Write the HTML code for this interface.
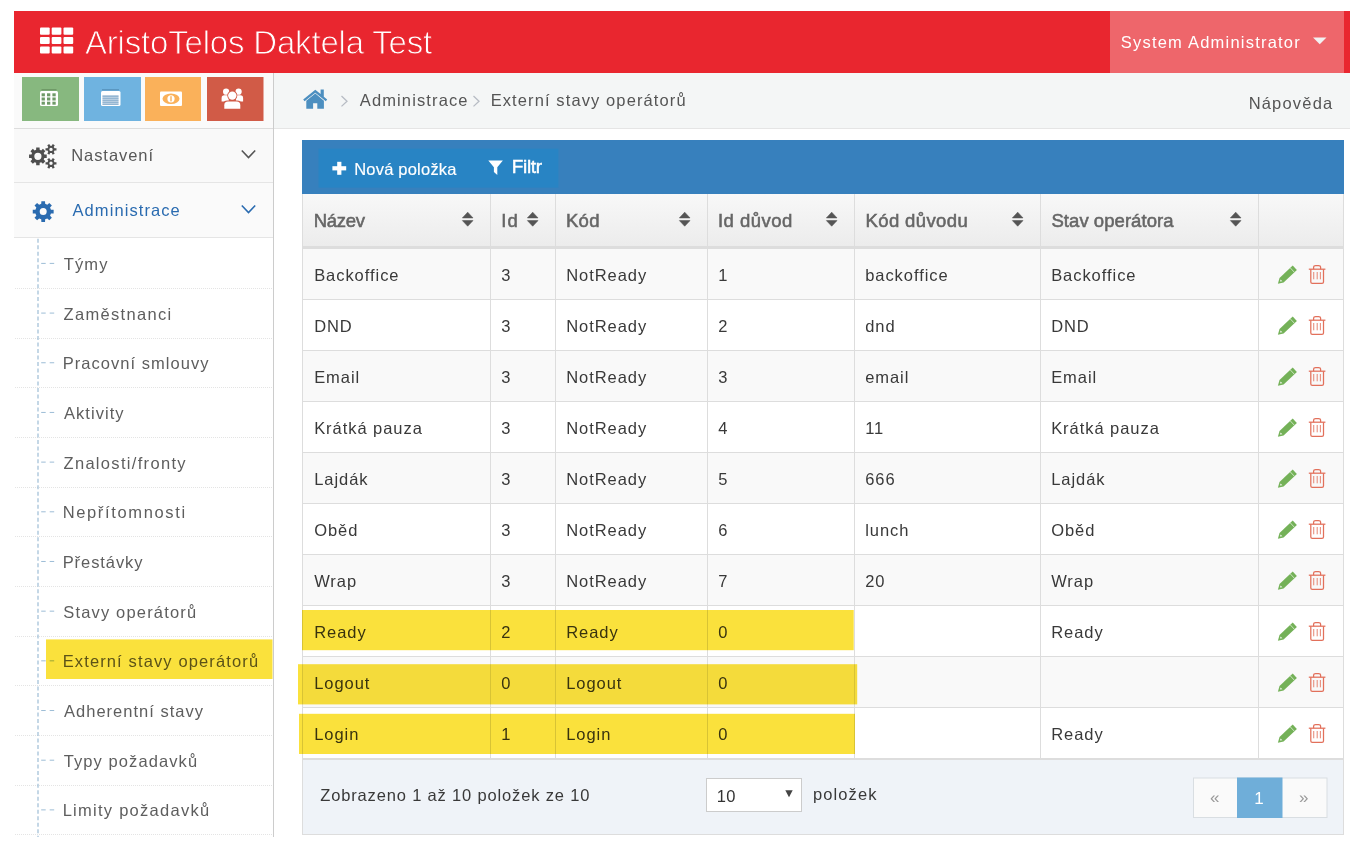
<!DOCTYPE html>
<html><head><meta charset="utf-8"><title>Externí stavy operátorů</title>
<style>
html,body{margin:0;padding:0;background:#fff;width:1366px;height:848px;overflow:hidden}
svg{display:block;font-family:"Liberation Sans",sans-serif}
</style></head><body>
<svg width="1366" height="848" viewBox="0 0 1366 848">
<rect x="14" y="11" width="1336" height="62" fill="#e9262f" />
<rect x="1110" y="11" width="234" height="62" fill="#ee666b" />
<rect x="40" y="27.6" width="9.7" height="7.2" fill="#fff" rx="1"/>
<rect x="40" y="36.9" width="9.7" height="7.2" fill="#fff" rx="1"/>
<rect x="40" y="46.4" width="9.7" height="7.2" fill="#fff" rx="1"/>
<rect x="51.7" y="27.6" width="9.7" height="7.2" fill="#fff" rx="1"/>
<rect x="51.7" y="36.9" width="9.7" height="7.2" fill="#fff" rx="1"/>
<rect x="51.7" y="46.4" width="9.7" height="7.2" fill="#fff" rx="1"/>
<rect x="63.5" y="27.6" width="9.7" height="7.2" fill="#fff" rx="1"/>
<rect x="63.5" y="36.9" width="9.7" height="7.2" fill="#fff" rx="1"/>
<rect x="63.5" y="46.4" width="9.7" height="7.2" fill="#fff" rx="1"/>
<text x="84.94" y="53.50" font-size="33" fill="#fff" textLength="347.31" lengthAdjust="spacing" stroke="#e9262f" stroke-width="0.9">AristoTelos Daktela Test</text>
<text x="1120.75" y="48.20" font-size="16.5" fill="#fff" textLength="179.02" lengthAdjust="spacing" >System Administrator</text>
<path d="M1313 37.5 L1326.5 37.5 L1319.75 44.2 Z" fill="#f2f2f2" />
<rect x="14" y="73" width="259" height="55" fill="#fafafa" />
<rect x="14" y="128" width="259" height="1" fill="#dddddd" />
<rect x="14" y="129" width="259" height="53" fill="#f9f9f9" />
<rect x="14" y="182" width="259" height="1" fill="#e5e5e5" />
<rect x="14" y="183" width="259" height="54" fill="#fafafa" />
<rect x="14" y="237" width="259" height="1" fill="#e5e5e5" />
<rect x="14" y="238" width="259" height="599" fill="#ffffff" />
<rect x="273" y="73" width="1" height="764" fill="#cccccc" />
<rect x="22" y="77" width="57" height="44" fill="#87b87f" />
<rect x="84" y="77" width="57" height="44" fill="#6fb3e0" />
<rect x="145" y="77" width="56" height="44" fill="#fab15a" />
<rect x="207" y="77" width="56.5" height="44" fill="#d15b47" />
<rect x="41.5" y="89.3" width="15" height="1" fill="#4f6f4a" opacity="0.6"/>
<rect x="40" y="91" width="18" height="15" fill="#ffffff" rx="1.5"/>
<rect x="41.6" y="93.3" width="3.3" height="3" fill="#6f9a68" />
<rect x="41.6" y="97.5" width="3.3" height="3" fill="#6f9a68" />
<rect x="41.6" y="101.7" width="3.3" height="3" fill="#6f9a68" />
<rect x="47" y="93.3" width="3.3" height="3" fill="#6f9a68" />
<rect x="47" y="97.5" width="3.3" height="3" fill="#6f9a68" />
<rect x="47" y="101.7" width="3.3" height="3" fill="#6f9a68" />
<rect x="52.4" y="93.3" width="3.3" height="3" fill="#6f9a68" />
<rect x="52.4" y="97.5" width="3.3" height="3" fill="#6f9a68" />
<rect x="52.4" y="101.7" width="3.3" height="3" fill="#6f9a68" />
<rect x="102" y="89.3" width="17" height="1" fill="#3f6f97" opacity="0.6"/>
<rect x="101" y="91" width="19.5" height="15" fill="#ffffff" rx="1.5"/>
<rect x="102.4" y="95.6" width="16.2" height="1" fill="#4f86b5" />
<rect x="102.4" y="97.6" width="16.2" height="1" fill="#4f86b5" />
<rect x="102.4" y="99.6" width="16.2" height="1" fill="#4f86b5" />
<rect x="102.4" y="101.6" width="16.2" height="1" fill="#4f86b5" />
<rect x="102.4" y="103.6" width="16.2" height="1" fill="#4f86b5" />
<rect x="160" y="91.5" width="22" height="14.5" fill="#ffffff" rx="1"/>
<ellipse cx="171" cy="98.8" rx="8.5" ry="5.2" fill="#fab15a"/>
<circle cx="171" cy="98.8" r="3.6" fill="#ffffff"/>
<rect x="170.3" y="96.2" width="1.4" height="5.2" fill="#fab15a" />
<circle cx="226.1" cy="91.7" r="3.1" fill="#fff"/>
<circle cx="238.6" cy="91.7" r="3.1" fill="#fff"/>
<path d="M221.6 101.5 L221.6 98 Q221.6 95.3 224.3 95.3 L228.8 95.3 L228.8 101.5 Z" fill="#fff" />
<path d="M243.1 101.5 L243.1 98 Q243.1 95.3 240.4 95.3 L235.9 95.3 L235.9 101.5 Z" fill="#fff" />
<circle cx="232.3" cy="95.6" r="5.0" fill="#d15b47"/>
<circle cx="232.3" cy="95.6" r="4.2" fill="#fff"/>
<path d="M223.2 109.2 L223.2 104.8 Q223.2 100.6 227.4 100.6 L237.2 100.6 Q241.4 100.6 241.4 104.8 L241.4 109.2 Z" fill="#d15b47" />
<path d="M224.3 108.7 L224.3 105.3 Q224.3 101.6 228 101.6 L236.6 101.6 Q240.3 101.6 240.3 105.3 L240.3 108.7 Z" fill="#fff" />
<path d="M44.36 154.51 L46.74 154.61 L46.74 157.99 L44.36 158.09 L43.73 159.60 L45.34 161.36 L42.96 163.74 L41.20 162.13 L39.69 162.76 L39.59 165.14 L36.21 165.14 L36.11 162.76 L34.60 162.13 L32.84 163.74 L30.46 161.36 L32.07 159.60 L31.44 158.09 L29.06 157.99 L29.06 154.61 L31.44 154.51 L32.07 153.00 L30.46 151.24 L32.84 148.86 L34.60 150.47 L36.11 149.84 L36.21 147.46 L39.59 147.46 L39.69 149.84 L41.20 150.47 L42.96 148.86 L45.34 151.24 L43.73 153.00 Z M34.30 156.30 a3.60 3.60 0 1 0 7.20 0 a3.60 3.60 0 1 0 -7.20 0 Z" fill="#4e4e4e" fill-rule="evenodd"/>
<path d="M54.53 148.30 L56.48 148.24 L56.48 150.56 L54.53 150.50 L53.72 151.91 L54.75 153.56 L52.73 154.73 L51.82 153.01 L50.18 153.01 L49.27 154.73 L47.25 153.56 L48.28 151.91 L47.47 150.50 L45.52 150.56 L45.52 148.24 L47.47 148.30 L48.28 146.89 L47.25 145.24 L49.27 144.07 L50.18 145.79 L51.82 145.79 L52.73 144.07 L54.75 145.24 L53.72 146.89 Z M49.30 149.40 a1.70 1.70 0 1 0 3.40 0 a1.70 1.70 0 1 0 -3.40 0 Z" fill="#4e4e4e" fill-rule="evenodd"/>
<path d="M54.53 162.20 L56.48 162.14 L56.48 164.46 L54.53 164.40 L53.72 165.81 L54.75 167.46 L52.73 168.63 L51.82 166.91 L50.18 166.91 L49.27 168.63 L47.25 167.46 L48.28 165.81 L47.47 164.40 L45.52 164.46 L45.52 162.14 L47.47 162.20 L48.28 160.79 L47.25 159.14 L49.27 157.97 L50.18 159.69 L51.82 159.69 L52.73 157.97 L54.75 159.14 L53.72 160.79 Z M49.30 163.30 a1.70 1.70 0 1 0 3.40 0 a1.70 1.70 0 1 0 -3.40 0 Z" fill="#4e4e4e" fill-rule="evenodd"/>
<text x="71.15" y="161.30" font-size="16.5" fill="#585858" textLength="81.93" lengthAdjust="spacing" >Nastavení</text>
<path d="M50.95 209.63 L53.64 209.78 L53.64 213.42 L50.95 213.57 L50.07 215.69 L51.87 217.70 L49.30 220.27 L47.29 218.47 L45.17 219.35 L45.02 222.04 L41.38 222.04 L41.23 219.35 L39.11 218.47 L37.10 220.27 L34.53 217.70 L36.33 215.69 L35.45 213.57 L32.76 213.42 L32.76 209.78 L35.45 209.63 L36.33 207.51 L34.53 205.50 L37.10 202.93 L39.11 204.73 L41.23 203.85 L41.38 201.16 L45.02 201.16 L45.17 203.85 L47.29 204.73 L49.30 202.93 L51.87 205.50 L50.07 207.51 Z M39.70 211.60 a3.50 3.50 0 1 0 7.00 0 a3.50 3.50 0 1 0 -7.00 0 Z" fill="#2a6bb0" fill-rule="evenodd"/>
<text x="72.47" y="216.20" font-size="16.5" fill="#2a6bb0" textLength="107.27" lengthAdjust="spacing" >Administrace</text>
<path d="M241.8 150.5 L248.5 157.5 L255.2 150.5" fill="none" stroke="#555" stroke-width="1.6"/>
<path d="M241.8 205.5 L248.5 212.5 L255.2 205.5" fill="none" stroke="#2a6bb0" stroke-width="1.6"/>
<line x1="15" y1="288.5" x2="273" y2="288.5" stroke="#e4e4e4" stroke-width="1" stroke-dasharray="1 1"/>
<line x1="15" y1="338.5" x2="273" y2="338.5" stroke="#e4e4e4" stroke-width="1" stroke-dasharray="1 1"/>
<line x1="15" y1="387.5" x2="273" y2="387.5" stroke="#e4e4e4" stroke-width="1" stroke-dasharray="1 1"/>
<line x1="15" y1="437.5" x2="273" y2="437.5" stroke="#e4e4e4" stroke-width="1" stroke-dasharray="1 1"/>
<line x1="15" y1="487.5" x2="273" y2="487.5" stroke="#e4e4e4" stroke-width="1" stroke-dasharray="1 1"/>
<line x1="15" y1="536.5" x2="273" y2="536.5" stroke="#e4e4e4" stroke-width="1" stroke-dasharray="1 1"/>
<line x1="15" y1="586.5" x2="273" y2="586.5" stroke="#e4e4e4" stroke-width="1" stroke-dasharray="1 1"/>
<line x1="15" y1="636.5" x2="273" y2="636.5" stroke="#e4e4e4" stroke-width="1" stroke-dasharray="1 1"/>
<line x1="15" y1="685.5" x2="273" y2="685.5" stroke="#e4e4e4" stroke-width="1" stroke-dasharray="1 1"/>
<line x1="15" y1="735.5" x2="273" y2="735.5" stroke="#e4e4e4" stroke-width="1" stroke-dasharray="1 1"/>
<line x1="15" y1="785.5" x2="273" y2="785.5" stroke="#e4e4e4" stroke-width="1" stroke-dasharray="1 1"/>
<line x1="15" y1="834.5" x2="273" y2="834.5" stroke="#e4e4e4" stroke-width="1" stroke-dasharray="1 1"/>
<line x1="38" y1="238.7" x2="38" y2="837" stroke="#9dbdd6" stroke-width="1.2" stroke-dasharray="4 2.49"/>
<line x1="41.2" y1="263.40" x2="54.3" y2="263.40" stroke="#9dbdd6" stroke-width="1" stroke-dasharray="4.5 4"/>
<text x="63.63" y="269.90" font-size="16.5" fill="#5e5e5e" textLength="43.90" lengthAdjust="spacing" >Týmy</text>
<line x1="41.2" y1="313.08" x2="54.3" y2="313.08" stroke="#9dbdd6" stroke-width="1" stroke-dasharray="4.5 4"/>
<text x="63.48" y="319.58" font-size="16.5" fill="#5e5e5e" textLength="107.64" lengthAdjust="spacing" >Zaměstnanci</text>
<line x1="41.2" y1="362.76" x2="54.3" y2="362.76" stroke="#9dbdd6" stroke-width="1" stroke-dasharray="4.5 4"/>
<text x="62.65" y="369.26" font-size="16.5" fill="#5e5e5e" textLength="145.89" lengthAdjust="spacing" >Pracovní smlouvy</text>
<line x1="41.2" y1="412.44" x2="54.3" y2="412.44" stroke="#9dbdd6" stroke-width="1" stroke-dasharray="4.5 4"/>
<text x="63.97" y="418.94" font-size="16.5" fill="#5e5e5e" textLength="59.56" lengthAdjust="spacing" >Aktivity</text>
<line x1="41.2" y1="462.12" x2="54.3" y2="462.12" stroke="#9dbdd6" stroke-width="1" stroke-dasharray="4.5 4"/>
<text x="63.48" y="468.62" font-size="16.5" fill="#5e5e5e" textLength="122.06" lengthAdjust="spacing" >Znalosti/fronty</text>
<line x1="41.2" y1="511.80" x2="54.3" y2="511.80" stroke="#9dbdd6" stroke-width="1" stroke-dasharray="4.5 4"/>
<text x="62.65" y="518.30" font-size="16.5" fill="#5e5e5e" textLength="122.47" lengthAdjust="spacing" >Nepřítomnosti</text>
<line x1="41.2" y1="561.48" x2="54.3" y2="561.48" stroke="#9dbdd6" stroke-width="1" stroke-dasharray="4.5 4"/>
<text x="62.65" y="567.98" font-size="16.5" fill="#5e5e5e" textLength="79.89" lengthAdjust="spacing" >Přestávky</text>
<line x1="41.2" y1="611.16" x2="54.3" y2="611.16" stroke="#9dbdd6" stroke-width="1" stroke-dasharray="4.5 4"/>
<text x="63.25" y="617.66" font-size="16.5" fill="#5e5e5e" textLength="132.84" lengthAdjust="spacing" >Stavy operátorů</text>
<line x1="41.2" y1="660.84" x2="54.3" y2="660.84" stroke="#9dbdd6" stroke-width="1" stroke-dasharray="4.5 4"/>
<text x="62.65" y="667.34" font-size="16.5" fill="#5e5e5e" textLength="195.45" lengthAdjust="spacing" >Externí stavy operátorů</text>
<line x1="41.2" y1="710.52" x2="54.3" y2="710.52" stroke="#9dbdd6" stroke-width="1" stroke-dasharray="4.5 4"/>
<text x="63.97" y="717.02" font-size="16.5" fill="#5e5e5e" textLength="139.06" lengthAdjust="spacing" >Adherentní stavy</text>
<line x1="41.2" y1="760.20" x2="54.3" y2="760.20" stroke="#9dbdd6" stroke-width="1" stroke-dasharray="4.5 4"/>
<text x="63.63" y="766.70" font-size="16.5" fill="#5e5e5e" textLength="133.47" lengthAdjust="spacing" >Typy požadavků</text>
<line x1="41.2" y1="809.88" x2="54.3" y2="809.88" stroke="#9dbdd6" stroke-width="1" stroke-dasharray="4.5 4"/>
<text x="62.65" y="816.38" font-size="16.5" fill="#5e5e5e" textLength="146.45" lengthAdjust="spacing" >Limity požadavků</text>
<rect x="274" y="73" width="1076" height="55" fill="#f4f6f6" />
<rect x="274" y="128" width="1076" height="1" fill="#e5e5e5" />
<path d="M303.2 99.6 L315.3 89.8 L320.6 94.1 L320.6 89.5 L323.8 89.5 L323.8 96.7 L327.2 99.6 L325.8 101.3 L315.3 92.7 L304.6 101.3 Z" fill="#4c8fc0" />
<path d="M306.3 100.8 L315.3 93.4 L323.9 100.8 L323.9 108.8 L317.3 108.8 L317.3 103.3 L313.1 103.3 L313.1 108.8 L306.3 108.8 Z" fill="#4c8fc0" />
<path d="M341.5 96 L347 101.2 L341.5 106.4" fill="none" stroke="#b7bcc4" stroke-width="1.3"/>
<path d="M473.5 96 L479 101.2 L473.5 106.4" fill="none" stroke="#b7bcc4" stroke-width="1.3"/>
<text x="359.77" y="105.60" font-size="16.5" fill="#555555" textLength="107.77" lengthAdjust="spacing" >Administrace</text>
<text x="490.65" y="105.60" font-size="16.5" fill="#555555" textLength="194.95" lengthAdjust="spacing" >Externí stavy operátorů</text>
<text x="1248.65" y="108.60" font-size="16.5" fill="#555555" textLength="83.55" lengthAdjust="spacing" >Nápověda</text>
<rect x="302" y="140" width="1042" height="54" fill="#3780bd" />
<rect x="318.5" y="148.6" width="152.5" height="39" fill="#2884c4" />
<rect x="471" y="148.6" width="87.4" height="39" fill="#2884c4" />
<rect x="337.2" y="161.8" width="4.2" height="13" fill="#fff" />
<rect x="332.4" y="166.2" width="13.8" height="4.2" fill="#fff" />
<text x="354.15" y="174.80" font-size="16.5" fill="#fff" textLength="102.35" lengthAdjust="spacing" stroke="#fff" stroke-width="0.15">Nová položka</text>
<path d="M488.3 160.6 L502.9 160.6 L497.3 167.2 L497.3 175.1 L493.9 172 L493.9 167.2 Z" fill="#fff" />
<text x="511.64" y="173.40" font-size="19" fill="#fff" textLength="30.47" lengthAdjust="spacing" stroke="#fff" stroke-width="0.45">Filtr</text>
<defs><linearGradient id="thg" x1="0" y1="0" x2="0" y2="1"><stop offset="0" stop-color="#f8f8f8"/><stop offset="1" stop-color="#ececec"/></linearGradient></defs>
<rect x="302" y="194" width="1042" height="52" fill="url(#thg)" />
<rect x="302" y="246" width="1042" height="3" fill="#dddddd" />
<rect x="302" y="249" width="1042" height="50" fill="#f9f9f9" />
<rect x="302" y="299" width="1042" height="1" fill="#dddddd" />
<rect x="302" y="300" width="1042" height="50" fill="#ffffff" />
<rect x="302" y="350" width="1042" height="1" fill="#dddddd" />
<rect x="302" y="351" width="1042" height="50" fill="#f9f9f9" />
<rect x="302" y="401" width="1042" height="1" fill="#dddddd" />
<rect x="302" y="402" width="1042" height="50" fill="#ffffff" />
<rect x="302" y="452" width="1042" height="1" fill="#dddddd" />
<rect x="302" y="453" width="1042" height="50" fill="#f9f9f9" />
<rect x="302" y="503" width="1042" height="1" fill="#dddddd" />
<rect x="302" y="504" width="1042" height="50" fill="#ffffff" />
<rect x="302" y="554" width="1042" height="1" fill="#dddddd" />
<rect x="302" y="555" width="1042" height="50" fill="#f9f9f9" />
<rect x="302" y="605" width="1042" height="1" fill="#dddddd" />
<rect x="302" y="606" width="1042" height="50" fill="#ffffff" />
<rect x="302" y="656" width="1042" height="1" fill="#dddddd" />
<rect x="302" y="657" width="1042" height="50" fill="#f9f9f9" />
<rect x="302" y="707" width="1042" height="1" fill="#dddddd" />
<rect x="302" y="708" width="1042" height="50" fill="#ffffff" />
<rect x="302" y="758" width="1042" height="1" fill="#dddddd" />
<rect x="302" y="194" width="1" height="564" fill="#dddddd" />
<rect x="490" y="194" width="1" height="564" fill="#dddddd" />
<rect x="555" y="194" width="1" height="564" fill="#dddddd" />
<rect x="707" y="194" width="1" height="564" fill="#dddddd" />
<rect x="854" y="194" width="1" height="564" fill="#dddddd" />
<rect x="1040" y="194" width="1" height="564" fill="#dddddd" />
<rect x="1258" y="194" width="1" height="564" fill="#dddddd" />
<rect x="1343" y="194" width="1" height="564" fill="#dddddd" />
<text x="313.68" y="227.30" font-size="18.5" fill="#666666" textLength="51.28" lengthAdjust="spacing" stroke="#666666" stroke-width="0.55">Název</text>
<path d="M462.40 217.9 L467.70 212.2 L473.00 217.9 Z M462.40 220.6 L467.70 226.2 L473.00 220.6 Z" fill="#555555" stroke="#555" stroke-width="0.6" stroke-linejoin="round"/>
<text x="501.29" y="227.30" font-size="18.5" fill="#666666" textLength="16.50" lengthAdjust="spacing" stroke="#666666" stroke-width="0.55">Id</text>
<path d="M527.40 217.9 L532.70 212.2 L538.00 217.9 Z M527.40 220.6 L532.70 226.2 L538.00 220.6 Z" fill="#555555" stroke="#555" stroke-width="0.6" stroke-linejoin="round"/>
<text x="565.98" y="227.30" font-size="18.5" fill="#666666" textLength="33.51" lengthAdjust="spacing" stroke="#666666" stroke-width="0.55">Kód</text>
<path d="M679.40 217.9 L684.70 212.2 L690.00 217.9 Z M679.40 220.6 L684.70 226.2 L690.00 220.6 Z" fill="#555555" stroke="#555" stroke-width="0.6" stroke-linejoin="round"/>
<text x="717.89" y="227.30" font-size="18.5" fill="#666666" textLength="74.40" lengthAdjust="spacing" stroke="#666666" stroke-width="0.55">Id důvod</text>
<path d="M826.40 217.9 L831.70 212.2 L837.00 217.9 Z M826.40 220.6 L831.70 226.2 L837.00 220.6 Z" fill="#555555" stroke="#555" stroke-width="0.6" stroke-linejoin="round"/>
<text x="865.48" y="227.30" font-size="18.5" fill="#666666" textLength="102.25" lengthAdjust="spacing" stroke="#666666" stroke-width="0.55">Kód důvodu</text>
<path d="M1012.40 217.9 L1017.70 212.2 L1023.00 217.9 Z M1012.40 220.6 L1017.70 226.2 L1023.00 220.6 Z" fill="#555555" stroke="#555" stroke-width="0.6" stroke-linejoin="round"/>
<text x="1051.46" y="227.30" font-size="18.5" fill="#666666" textLength="122.04" lengthAdjust="spacing" stroke="#666666" stroke-width="0.55">Stav operátora</text>
<path d="M1230.40 217.9 L1235.70 212.2 L1241.00 217.9 Z M1230.40 220.6 L1235.70 226.2 L1241.00 220.6 Z" fill="#555555" stroke="#555" stroke-width="0.6" stroke-linejoin="round"/>
<text x="314.15" y="281.20" font-size="16.5" fill="#393939" letter-spacing="0.95" >Backoffice</text>
<text x="501.15" y="281.20" font-size="16.5" fill="#393939" letter-spacing="0.95" >3</text>
<text x="566.15" y="281.20" font-size="16.5" fill="#393939" letter-spacing="0.95" >NotReady</text>
<text x="718.15" y="281.20" font-size="16.5" fill="#393939" letter-spacing="0.95" >1</text>
<text x="865.15" y="281.20" font-size="16.5" fill="#393939" letter-spacing="0.95" >backoffice</text>
<text x="1051.15" y="281.20" font-size="16.5" fill="#393939" letter-spacing="0.95" >Backoffice</text>
<path d="M1277.9 283.70 L1279.5 278.10 L1292.7 265.60 L1296.9 270.00 L1283.6 282.50 Z" fill="#74b158" />
<path d="M1290.3 267.90 L1294.4 272.30" stroke="#dff0d8" stroke-width="0.8"/>
<path d="M1279.9 281.40 L1280.6 279.60 L1282.4 281.30 Z" fill="#eef6ea" />
<g fill="none" stroke="#e2705b" stroke-width="1.25"><path d="M1308.8 269.20 L1325.4 269.20"/><path d="M1313.6 269.20 L1313.6 267.00 Q1313.6 265.60 1315.6 265.60 L1318.6 265.60 Q1320.6 265.60 1320.6 267.00 L1320.6 269.20"/><path d="M1310.8 269.20 L1310.8 281.90 Q1310.8 283.30 1312.3 283.30 L1322 283.30 Q1323.5 283.30 1323.5 281.90 L1323.5 269.20"/></g>
<rect x="1313.15" y="272" width="1.1" height="7.3" fill="#e8907f" />
<rect x="1316.65" y="272" width="1.1" height="7.3" fill="#e8907f" />
<rect x="1319.85" y="272" width="1.1" height="7.3" fill="#e8907f" />
<text x="314.15" y="332.20" font-size="16.5" fill="#393939" letter-spacing="0.95" >DND</text>
<text x="501.15" y="332.20" font-size="16.5" fill="#393939" letter-spacing="0.95" >3</text>
<text x="566.15" y="332.20" font-size="16.5" fill="#393939" letter-spacing="0.95" >NotReady</text>
<text x="718.15" y="332.20" font-size="16.5" fill="#393939" letter-spacing="0.95" >2</text>
<text x="865.15" y="332.20" font-size="16.5" fill="#393939" letter-spacing="0.95" >dnd</text>
<text x="1051.15" y="332.20" font-size="16.5" fill="#393939" letter-spacing="0.95" >DND</text>
<path d="M1277.9 334.70 L1279.5 329.10 L1292.7 316.60 L1296.9 321.00 L1283.6 333.50 Z" fill="#74b158" />
<path d="M1290.3 318.90 L1294.4 323.30" stroke="#dff0d8" stroke-width="0.8"/>
<path d="M1279.9 332.40 L1280.6 330.60 L1282.4 332.30 Z" fill="#eef6ea" />
<g fill="none" stroke="#e2705b" stroke-width="1.25"><path d="M1308.8 320.20 L1325.4 320.20"/><path d="M1313.6 320.20 L1313.6 318.00 Q1313.6 316.60 1315.6 316.60 L1318.6 316.60 Q1320.6 316.60 1320.6 318.00 L1320.6 320.20"/><path d="M1310.8 320.20 L1310.8 332.90 Q1310.8 334.30 1312.3 334.30 L1322 334.30 Q1323.5 334.30 1323.5 332.90 L1323.5 320.20"/></g>
<rect x="1313.15" y="323" width="1.1" height="7.3" fill="#e8907f" />
<rect x="1316.65" y="323" width="1.1" height="7.3" fill="#e8907f" />
<rect x="1319.85" y="323" width="1.1" height="7.3" fill="#e8907f" />
<text x="314.15" y="383.20" font-size="16.5" fill="#393939" letter-spacing="0.95" >Email</text>
<text x="501.15" y="383.20" font-size="16.5" fill="#393939" letter-spacing="0.95" >3</text>
<text x="566.15" y="383.20" font-size="16.5" fill="#393939" letter-spacing="0.95" >NotReady</text>
<text x="718.15" y="383.20" font-size="16.5" fill="#393939" letter-spacing="0.95" >3</text>
<text x="865.15" y="383.20" font-size="16.5" fill="#393939" letter-spacing="0.95" >email</text>
<text x="1051.15" y="383.20" font-size="16.5" fill="#393939" letter-spacing="0.95" >Email</text>
<path d="M1277.9 385.70 L1279.5 380.10 L1292.7 367.60 L1296.9 372.00 L1283.6 384.50 Z" fill="#74b158" />
<path d="M1290.3 369.90 L1294.4 374.30" stroke="#dff0d8" stroke-width="0.8"/>
<path d="M1279.9 383.40 L1280.6 381.60 L1282.4 383.30 Z" fill="#eef6ea" />
<g fill="none" stroke="#e2705b" stroke-width="1.25"><path d="M1308.8 371.20 L1325.4 371.20"/><path d="M1313.6 371.20 L1313.6 369.00 Q1313.6 367.60 1315.6 367.60 L1318.6 367.60 Q1320.6 367.60 1320.6 369.00 L1320.6 371.20"/><path d="M1310.8 371.20 L1310.8 383.90 Q1310.8 385.30 1312.3 385.30 L1322 385.30 Q1323.5 385.30 1323.5 383.90 L1323.5 371.20"/></g>
<rect x="1313.15" y="374" width="1.1" height="7.3" fill="#e8907f" />
<rect x="1316.65" y="374" width="1.1" height="7.3" fill="#e8907f" />
<rect x="1319.85" y="374" width="1.1" height="7.3" fill="#e8907f" />
<text x="314.15" y="434.20" font-size="16.5" fill="#393939" letter-spacing="0.95" >Krátká pauza</text>
<text x="501.15" y="434.20" font-size="16.5" fill="#393939" letter-spacing="0.95" >3</text>
<text x="566.15" y="434.20" font-size="16.5" fill="#393939" letter-spacing="0.95" >NotReady</text>
<text x="718.15" y="434.20" font-size="16.5" fill="#393939" letter-spacing="0.95" >4</text>
<text x="865.15" y="434.20" font-size="16.5" fill="#393939" letter-spacing="0.95" >11</text>
<text x="1051.15" y="434.20" font-size="16.5" fill="#393939" letter-spacing="0.95" >Krátká pauza</text>
<path d="M1277.9 436.70 L1279.5 431.10 L1292.7 418.60 L1296.9 423.00 L1283.6 435.50 Z" fill="#74b158" />
<path d="M1290.3 420.90 L1294.4 425.30" stroke="#dff0d8" stroke-width="0.8"/>
<path d="M1279.9 434.40 L1280.6 432.60 L1282.4 434.30 Z" fill="#eef6ea" />
<g fill="none" stroke="#e2705b" stroke-width="1.25"><path d="M1308.8 422.20 L1325.4 422.20"/><path d="M1313.6 422.20 L1313.6 420.00 Q1313.6 418.60 1315.6 418.60 L1318.6 418.60 Q1320.6 418.60 1320.6 420.00 L1320.6 422.20"/><path d="M1310.8 422.20 L1310.8 434.90 Q1310.8 436.30 1312.3 436.30 L1322 436.30 Q1323.5 436.30 1323.5 434.90 L1323.5 422.20"/></g>
<rect x="1313.15" y="425" width="1.1" height="7.3" fill="#e8907f" />
<rect x="1316.65" y="425" width="1.1" height="7.3" fill="#e8907f" />
<rect x="1319.85" y="425" width="1.1" height="7.3" fill="#e8907f" />
<text x="314.15" y="485.20" font-size="16.5" fill="#393939" letter-spacing="0.95" >Lajdák</text>
<text x="501.15" y="485.20" font-size="16.5" fill="#393939" letter-spacing="0.95" >3</text>
<text x="566.15" y="485.20" font-size="16.5" fill="#393939" letter-spacing="0.95" >NotReady</text>
<text x="718.15" y="485.20" font-size="16.5" fill="#393939" letter-spacing="0.95" >5</text>
<text x="865.15" y="485.20" font-size="16.5" fill="#393939" letter-spacing="0.95" >666</text>
<text x="1051.15" y="485.20" font-size="16.5" fill="#393939" letter-spacing="0.95" >Lajdák</text>
<path d="M1277.9 487.70 L1279.5 482.10 L1292.7 469.60 L1296.9 474.00 L1283.6 486.50 Z" fill="#74b158" />
<path d="M1290.3 471.90 L1294.4 476.30" stroke="#dff0d8" stroke-width="0.8"/>
<path d="M1279.9 485.40 L1280.6 483.60 L1282.4 485.30 Z" fill="#eef6ea" />
<g fill="none" stroke="#e2705b" stroke-width="1.25"><path d="M1308.8 473.20 L1325.4 473.20"/><path d="M1313.6 473.20 L1313.6 471.00 Q1313.6 469.60 1315.6 469.60 L1318.6 469.60 Q1320.6 469.60 1320.6 471.00 L1320.6 473.20"/><path d="M1310.8 473.20 L1310.8 485.90 Q1310.8 487.30 1312.3 487.30 L1322 487.30 Q1323.5 487.30 1323.5 485.90 L1323.5 473.20"/></g>
<rect x="1313.15" y="476" width="1.1" height="7.3" fill="#e8907f" />
<rect x="1316.65" y="476" width="1.1" height="7.3" fill="#e8907f" />
<rect x="1319.85" y="476" width="1.1" height="7.3" fill="#e8907f" />
<text x="314.15" y="536.20" font-size="16.5" fill="#393939" letter-spacing="0.95" >Oběd</text>
<text x="501.15" y="536.20" font-size="16.5" fill="#393939" letter-spacing="0.95" >3</text>
<text x="566.15" y="536.20" font-size="16.5" fill="#393939" letter-spacing="0.95" >NotReady</text>
<text x="718.15" y="536.20" font-size="16.5" fill="#393939" letter-spacing="0.95" >6</text>
<text x="865.15" y="536.20" font-size="16.5" fill="#393939" letter-spacing="0.95" >lunch</text>
<text x="1051.15" y="536.20" font-size="16.5" fill="#393939" letter-spacing="0.95" >Oběd</text>
<path d="M1277.9 538.70 L1279.5 533.10 L1292.7 520.60 L1296.9 525.00 L1283.6 537.50 Z" fill="#74b158" />
<path d="M1290.3 522.90 L1294.4 527.30" stroke="#dff0d8" stroke-width="0.8"/>
<path d="M1279.9 536.40 L1280.6 534.60 L1282.4 536.30 Z" fill="#eef6ea" />
<g fill="none" stroke="#e2705b" stroke-width="1.25"><path d="M1308.8 524.20 L1325.4 524.20"/><path d="M1313.6 524.20 L1313.6 522.00 Q1313.6 520.60 1315.6 520.60 L1318.6 520.60 Q1320.6 520.60 1320.6 522.00 L1320.6 524.20"/><path d="M1310.8 524.20 L1310.8 536.90 Q1310.8 538.30 1312.3 538.30 L1322 538.30 Q1323.5 538.30 1323.5 536.90 L1323.5 524.20"/></g>
<rect x="1313.15" y="527" width="1.1" height="7.3" fill="#e8907f" />
<rect x="1316.65" y="527" width="1.1" height="7.3" fill="#e8907f" />
<rect x="1319.85" y="527" width="1.1" height="7.3" fill="#e8907f" />
<text x="314.15" y="587.20" font-size="16.5" fill="#393939" letter-spacing="0.95" >Wrap</text>
<text x="501.15" y="587.20" font-size="16.5" fill="#393939" letter-spacing="0.95" >3</text>
<text x="566.15" y="587.20" font-size="16.5" fill="#393939" letter-spacing="0.95" >NotReady</text>
<text x="718.15" y="587.20" font-size="16.5" fill="#393939" letter-spacing="0.95" >7</text>
<text x="865.15" y="587.20" font-size="16.5" fill="#393939" letter-spacing="0.95" >20</text>
<text x="1051.15" y="587.20" font-size="16.5" fill="#393939" letter-spacing="0.95" >Wrap</text>
<path d="M1277.9 589.70 L1279.5 584.10 L1292.7 571.60 L1296.9 576.00 L1283.6 588.50 Z" fill="#74b158" />
<path d="M1290.3 573.90 L1294.4 578.30" stroke="#dff0d8" stroke-width="0.8"/>
<path d="M1279.9 587.40 L1280.6 585.60 L1282.4 587.30 Z" fill="#eef6ea" />
<g fill="none" stroke="#e2705b" stroke-width="1.25"><path d="M1308.8 575.20 L1325.4 575.20"/><path d="M1313.6 575.20 L1313.6 573.00 Q1313.6 571.60 1315.6 571.60 L1318.6 571.60 Q1320.6 571.60 1320.6 573.00 L1320.6 575.20"/><path d="M1310.8 575.20 L1310.8 587.90 Q1310.8 589.30 1312.3 589.30 L1322 589.30 Q1323.5 589.30 1323.5 587.90 L1323.5 575.20"/></g>
<rect x="1313.15" y="578" width="1.1" height="7.3" fill="#e8907f" />
<rect x="1316.65" y="578" width="1.1" height="7.3" fill="#e8907f" />
<rect x="1319.85" y="578" width="1.1" height="7.3" fill="#e8907f" />
<text x="314.15" y="638.20" font-size="16.5" fill="#393939" letter-spacing="0.95" >Ready</text>
<text x="501.15" y="638.20" font-size="16.5" fill="#393939" letter-spacing="0.95" >2</text>
<text x="566.15" y="638.20" font-size="16.5" fill="#393939" letter-spacing="0.95" >Ready</text>
<text x="718.15" y="638.20" font-size="16.5" fill="#393939" letter-spacing="0.95" >0</text>
<text x="1051.15" y="638.20" font-size="16.5" fill="#393939" letter-spacing="0.95" >Ready</text>
<path d="M1277.9 640.70 L1279.5 635.10 L1292.7 622.60 L1296.9 627.00 L1283.6 639.50 Z" fill="#74b158" />
<path d="M1290.3 624.90 L1294.4 629.30" stroke="#dff0d8" stroke-width="0.8"/>
<path d="M1279.9 638.40 L1280.6 636.60 L1282.4 638.30 Z" fill="#eef6ea" />
<g fill="none" stroke="#e2705b" stroke-width="1.25"><path d="M1308.8 626.20 L1325.4 626.20"/><path d="M1313.6 626.20 L1313.6 624.00 Q1313.6 622.60 1315.6 622.60 L1318.6 622.60 Q1320.6 622.60 1320.6 624.00 L1320.6 626.20"/><path d="M1310.8 626.20 L1310.8 638.90 Q1310.8 640.30 1312.3 640.30 L1322 640.30 Q1323.5 640.30 1323.5 638.90 L1323.5 626.20"/></g>
<rect x="1313.15" y="629" width="1.1" height="7.3" fill="#e8907f" />
<rect x="1316.65" y="629" width="1.1" height="7.3" fill="#e8907f" />
<rect x="1319.85" y="629" width="1.1" height="7.3" fill="#e8907f" />
<text x="314.15" y="689.20" font-size="16.5" fill="#393939" letter-spacing="0.95" >Logout</text>
<text x="501.15" y="689.20" font-size="16.5" fill="#393939" letter-spacing="0.95" >0</text>
<text x="566.15" y="689.20" font-size="16.5" fill="#393939" letter-spacing="0.95" >Logout</text>
<text x="718.15" y="689.20" font-size="16.5" fill="#393939" letter-spacing="0.95" >0</text>
<path d="M1277.9 691.70 L1279.5 686.10 L1292.7 673.60 L1296.9 678.00 L1283.6 690.50 Z" fill="#74b158" />
<path d="M1290.3 675.90 L1294.4 680.30" stroke="#dff0d8" stroke-width="0.8"/>
<path d="M1279.9 689.40 L1280.6 687.60 L1282.4 689.30 Z" fill="#eef6ea" />
<g fill="none" stroke="#e2705b" stroke-width="1.25"><path d="M1308.8 677.20 L1325.4 677.20"/><path d="M1313.6 677.20 L1313.6 675.00 Q1313.6 673.60 1315.6 673.60 L1318.6 673.60 Q1320.6 673.60 1320.6 675.00 L1320.6 677.20"/><path d="M1310.8 677.20 L1310.8 689.90 Q1310.8 691.30 1312.3 691.30 L1322 691.30 Q1323.5 691.30 1323.5 689.90 L1323.5 677.20"/></g>
<rect x="1313.15" y="680" width="1.1" height="7.3" fill="#e8907f" />
<rect x="1316.65" y="680" width="1.1" height="7.3" fill="#e8907f" />
<rect x="1319.85" y="680" width="1.1" height="7.3" fill="#e8907f" />
<text x="314.15" y="740.20" font-size="16.5" fill="#393939" letter-spacing="0.95" >Login</text>
<text x="501.15" y="740.20" font-size="16.5" fill="#393939" letter-spacing="0.95" >1</text>
<text x="566.15" y="740.20" font-size="16.5" fill="#393939" letter-spacing="0.95" >Login</text>
<text x="718.15" y="740.20" font-size="16.5" fill="#393939" letter-spacing="0.95" >0</text>
<text x="1051.15" y="740.20" font-size="16.5" fill="#393939" letter-spacing="0.95" >Ready</text>
<path d="M1277.9 742.70 L1279.5 737.10 L1292.7 724.60 L1296.9 729.00 L1283.6 741.50 Z" fill="#74b158" />
<path d="M1290.3 726.90 L1294.4 731.30" stroke="#dff0d8" stroke-width="0.8"/>
<path d="M1279.9 740.40 L1280.6 738.60 L1282.4 740.30 Z" fill="#eef6ea" />
<g fill="none" stroke="#e2705b" stroke-width="1.25"><path d="M1308.8 728.20 L1325.4 728.20"/><path d="M1313.6 728.20 L1313.6 726.00 Q1313.6 724.60 1315.6 724.60 L1318.6 724.60 Q1320.6 724.60 1320.6 726.00 L1320.6 728.20"/><path d="M1310.8 728.20 L1310.8 740.90 Q1310.8 742.30 1312.3 742.30 L1322 742.30 Q1323.5 742.30 1323.5 740.90 L1323.5 728.20"/></g>
<rect x="1313.15" y="731" width="1.1" height="7.3" fill="#e8907f" />
<rect x="1316.65" y="731" width="1.1" height="7.3" fill="#e8907f" />
<rect x="1319.85" y="731" width="1.1" height="7.3" fill="#e8907f" />
<rect x="302" y="758" width="1042" height="2" fill="#dddddd" />
<rect x="302" y="760" width="1042" height="74" fill="#eff3f8" />
<rect x="302" y="834" width="1042" height="1" fill="#dddddd" />
<rect x="302" y="758" width="1" height="77" fill="#dddddd" />
<rect x="1343" y="758" width="1" height="77" fill="#dddddd" />
<text x="320.28" y="801.40" font-size="16.5" fill="#393939" textLength="269.17" lengthAdjust="spacing" >Zobrazeno 1 až 10 položek ze 10</text>
<rect x="706" y="778" width="96" height="34" fill="#cccccc" />
<rect x="707" y="779" width="94" height="32" fill="#ffffff" />
<text x="716.74" y="801.90" font-size="16.5" fill="#333333" letter-spacing="0.3" >10</text>
<path d="M785.3 790.2 L792.7 790.2 L789 797.3 Z" fill="#444444" />
<text x="812.94" y="799.60" font-size="16.5" fill="#393939" textLength="63.54" lengthAdjust="spacing" >položek</text>
<rect x="1193" y="777.5" width="134.5" height="40.5" fill="#d9dee2" />
<rect x="1194" y="778.5" width="132.5" height="38.5" fill="#fafafa" />
<rect x="1237" y="777.5" width="45.5" height="40.5" fill="#6faed9" />
<text x="1210.11" y="803.00" font-size="17" fill="#999999" >«</text>
<text x="1254.21" y="803.50" font-size="17" fill="#ffffff" >1</text>
<text x="1299.11" y="803.00" font-size="17" fill="#999999" >»</text>
<rect x="46" y="639.4" width="226.5" height="39.6" fill="#fae13c" style="mix-blend-mode:multiply"/>
<rect x="302" y="610" width="551.7" height="40.2" fill="#fae13c" style="mix-blend-mode:multiply"/>
<rect x="298" y="664.2" width="559.2" height="40.2" fill="#fae13c" style="mix-blend-mode:multiply"/>
<rect x="299" y="713.8" width="556" height="40.2" fill="#fae13c" style="mix-blend-mode:multiply"/>
</svg>
</body></html>
